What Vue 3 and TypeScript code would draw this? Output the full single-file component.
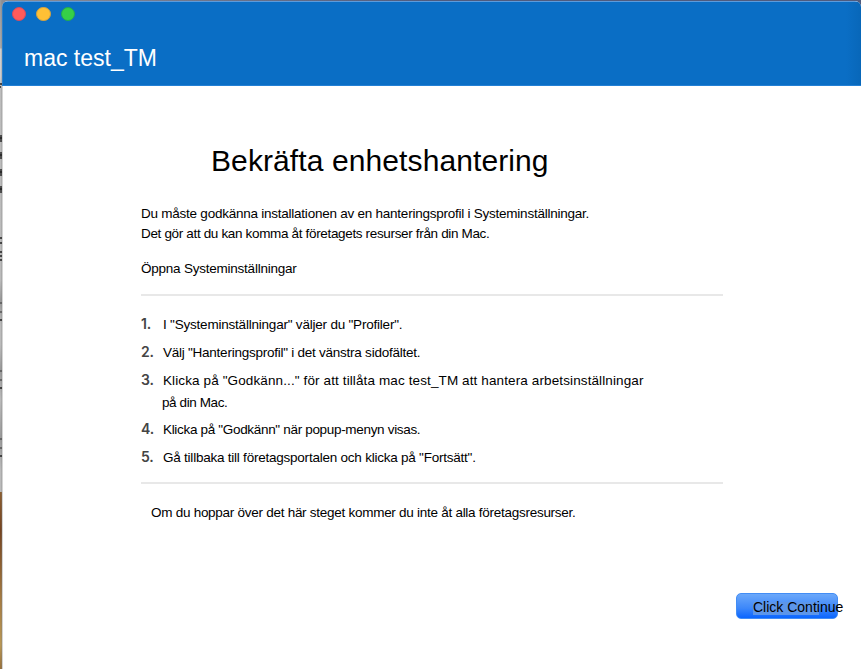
<script setup lang="ts">
interface Step {
  id: number
  lines: string[]
}

const steps: Step[] = [
  { id: 1, lines: ['I "Systeminställningar" väljer du "Profiler".'] },
  { id: 2, lines: ['Välj "Hanteringsprofil" i det vänstra sidofältet.'] },
  {
    id: 3,
    lines: ['Klicka på "Godkänn..." för att tillåta mac test_TM att hantera arbetsinställningar', 'på din Mac.'],
  },
  { id: 4, lines: ['Klicka på "Godkänn" när popup-menyn visas.'] },
  { id: 5, lines: ['Gå tillbaka till företagsportalen och klicka på "Fortsätt".'] },
]
</script>

<template>
  <div class="desktop">
    <div class="backdrop" aria-hidden="true">
      <svg width="3" height="669" viewBox="0 0 3 669">
        <path
          d="M0 84h2M0 87h1M1 135v7M1 152v7M1 169v7M1 186v7M0 138h2M0 155h2M0 172h2M0 189h2M0 238h2M0 243h2M0 252h2M0 256h2M0 260h2M0 320h2M0 388h2M0 456h2"
          stroke="#222"
          stroke-width="1.4"
        />
        <path d="M0 303h2M0 312h2M0 371h2M0 380h2M0 439h2M0 448h2" stroke="#555" stroke-width="1.6" />
      </svg>
    </div>
    <main class="window">
      <header class="titlebar">
        <div class="lights">
          <span class="light red"></span>
          <span class="light yellow"></span>
          <span class="light green"></span>
        </div>
        <div class="app-name">mac test_TM</div>
      </header>
      <section class="content">
        <h1>Bekräfta enhetshantering</h1>
        <p class="intro">Du måste godkänna installationen av en hanteringsprofil i Systeminställningar.</p>
        <p class="result">Det gör att du kan komma åt företagets resurser från din Mac.</p>
        <p class="open">Öppna Systeminställningar</p>
        <ol class="steps">
          <li v-for="step in steps" :key="step.id" :class="'step-' + step.id">
            <span class="number">{{ step.id }}.</span>
            <div class="lines">
              <div v-for="line in step.lines" :key="line" class="line">{{ line }}</div>
            </div>
          </li>
        </ol>
        <p class="note">Om du hoppar över det här steget kommer du inte åt alla företagsresurser.</p>
      </section>
      <button class="continue" type="button">Click Continue</button>
    </main>
  </div>
</template>

<style>
body {
  overflow: hidden;
}
</style>

<style scoped>
.desktop {
  display: grid;
  grid-template-columns: 2px 859px;
  width: 861px;
  height: 669px;
  box-sizing: border-box;
  padding-top: 1px;
  background: linear-gradient(90deg, #8b8d96 0, #505b7d 50%, #505b7d 100%);
  font-family: "Liberation Sans", Arial, sans-serif;
  color: #000;
  overflow: hidden;
}
.backdrop {
  height: 669px;
  margin-top: -1px;
  overflow: hidden;
  background:
    linear-gradient(90deg, transparent 1px, rgba(120, 120, 120, 0.25) 1px),
    linear-gradient(#9a9a9e 0, #aaa 48px, #d0d0d0 49px, #cfcfcf 76px, #bdbdbd 90px, #bbb 280px, #999 300px, #bbb 325px, #bbb 345px, #999 370px, #bbb 400px, #999 438px, #bbb 470px, #bbb 492px, #8c5f31 492px, #754420 530px, #a67c42 600px, #b99755 645px, #98703a 669px);
}
.backdrop svg {
  display: block;
}
.window {
  display: flex;
  flex-direction: column;
  height: 668px;
  background: linear-gradient(90deg, #d4d4d4 1px, #fff 1px);
  border-radius: 6px 6px 0 0;
  overflow: hidden;
}
.titlebar {
  flex: none;
  height: 85px;
  box-sizing: border-box;
  padding: 5px 0 0 10px;
  border-top: 1px solid #5c9bdc;
  border-bottom: 1px solid #2380d5;
  background: linear-gradient(90deg, #4b90d0 0, #0a6ec5 1px, #0a6ec5 844px, #0867b9 859px);
}
.lights {
  display: flex;
  gap: 9.9px;
}
.light {
  width: 14.4px;
  height: 14.4px;
  box-sizing: border-box;
  border-radius: 50%;
}
.red {
  background: #ff5b5a;
  border: 1px solid #d64b60;
}
.yellow {
  background: #ffc035;
  border: 1px solid #cfa044;
}
.green {
  background: #36d047;
  border: 1px solid #24aa50;
}
.app-name {
  margin: 24px 0 0 12px;
  font-size: 23px;
  line-height: 26px;
  color: #fff;
}
.content {
  width: 582px;
  margin-left: 139px;
  padding-top: 57px;
  font-size: 13.5px;
  line-height: 20px;
  white-space: nowrap;
}
h1 {
  margin: 0 0 25px 70px;
  font-size: 30px;
  line-height: 36px;
  font-weight: 400;
  letter-spacing: 0.1px;
}
p {
  margin: 0;
}
.intro {
  letter-spacing: -0.24px;
}
.result {
  letter-spacing: -0.34px;
}
.open {
  margin-top: 15px;
  letter-spacing: -0.23px;
}
.steps {
  list-style: none;
  display: flex;
  flex-direction: column;
  gap: 6px;
  margin: 15px 0 0;
  padding: 18px 0 13px;
  border-top: 2px solid #e8e8e8;
  border-bottom: 2px solid #e8e8e8;
}
.steps li {
  display: flex;
  line-height: 22px;
}
.number {
  width: 22px;
  font: 600 14px/20px Inter, sans-serif;
  letter-spacing: -0.2px;
  color: #444;
}
.step-1 {
  letter-spacing: -0.21px;
}
.step-2 {
  letter-spacing: -0.245px;
}
.step-3 {
  margin-bottom: -1px;
  letter-spacing: 0.116px;
}
.step-3 .line + .line {
  margin-left: -1px;
  letter-spacing: -0.4px;
}
.step-4 {
  letter-spacing: -0.32px;
}
.step-5 {
  letter-spacing: -0.23px;
}
.note {
  margin: 19px 0 0 10px;
  letter-spacing: -0.27px;
}
.continue {
  width: 102px;
  height: 26px;
  margin: 70px 0 0 734px;
  padding: 0 0 0 16px;
  border: 1px solid #428df5;
  border-radius: 5px;
  background:
    linear-gradient(#5c96ea, #5c96ea) 16px 8px / 66px 13px no-repeat,
    linear-gradient(#6ba8fa, #3c87fa 60%, #0a65ff);
  font: 14px/26px "Liberation Sans", Arial, sans-serif;
  text-align: left;
  color: #000;
  white-space: nowrap;
}
</style>
